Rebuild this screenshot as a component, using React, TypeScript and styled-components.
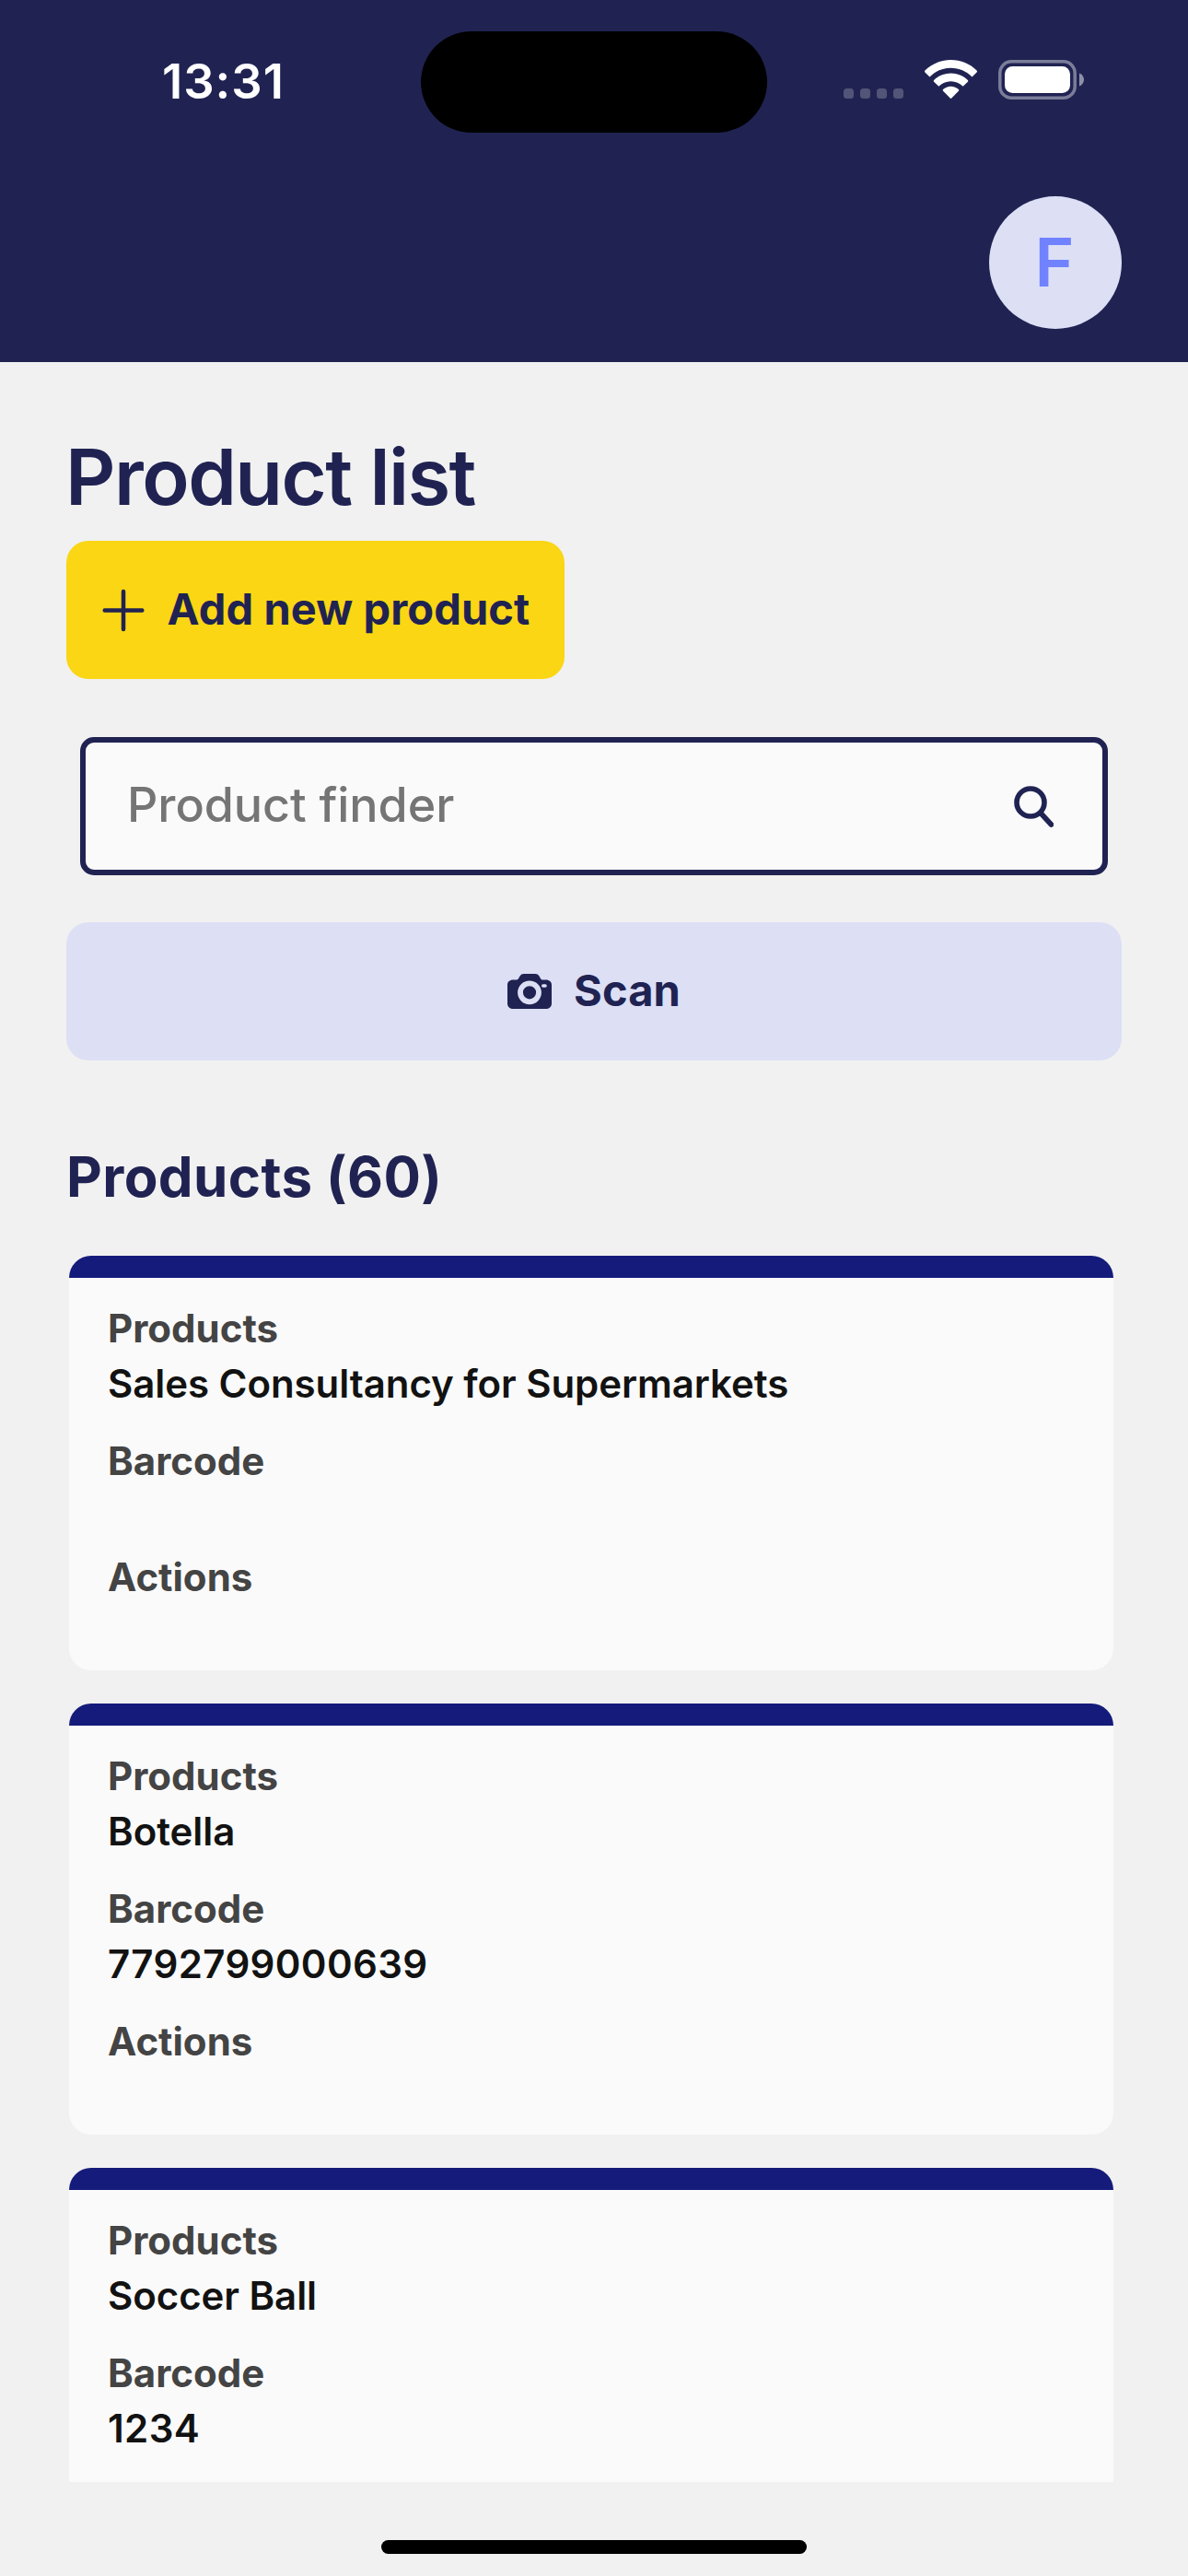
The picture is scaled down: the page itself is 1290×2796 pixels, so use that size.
import React from "react";
import styled, { createGlobalStyle } from "styled-components";

const NAVY = "#202352";
const LAVENDER = "#dddff5";

const GlobalStyle = createGlobalStyle`
  *, *::before, *::after { box-sizing: border-box; }
  html, body { margin: 0; padding: 0; background: #f1f1f1; }
  body { font-family: Inter, "Liberation Sans", sans-serif; }
  h1, h2, p { margin: 0; }
  button { font-family: inherit; border: 0; }
  svg { display: block; flex: none; }
`;

const Screen = styled.div`
  display: flex;
  flex-direction: column;
  width: 1290px;
  height: 2796px;
  overflow: hidden;
  background: #f1f1f1;
`;

const Header = styled.header`
  flex: none;
  height: 393px;
  background: ${NAVY};
`;

const StatusBar = styled.div`
  display: grid;
  grid-template-columns: 457px 376px 457px;
  height: 213px;
  padding-top: 34px;
`;

const Clock = styled.span`
  height: 110px;
  padding-left: 176px;
  line-height: 109px;
  font-size: 52.5px;
  font-weight: 600;
  letter-spacing: 1px;
  color: #fff;
  white-space: nowrap;
`;

const Island = styled.div`
  height: 110px;
  border-radius: 55px;
  background: #000;
`;

const Indicators = styled.div`
  display: flex;
  align-items: flex-end;
  height: 74px;
  padding-left: 83px;
`;

const SignalDots = styled.div`
  display: flex;
  gap: 7px;
  margin: 0 23px 1px 0;
`;

const Dot = styled.i`
  width: 11px;
  height: 11px;
  border-radius: 3.5px;
  background: #525578;
`;

const Wifi = styled.svg`
  margin: 0 23px 1px 0;
`;

const AvatarRow = styled.div`
  display: flex;
  justify-content: flex-end;
  padding-right: 72px;
`;

const Avatar = styled.div`
  display: flex;
  align-items: center;
  justify-content: center;
  width: 144px;
  height: 144px;
  padding-right: 2px;
  border-radius: 50%;
  background: ${LAVENDER};
  color: #7082ff;
  font-size: 73px;
  font-weight: 580;
  line-height: 144px;
`;

const Main = styled.main`
  display: flex;
  flex-direction: column;
  height: 2301px;
  padding: 70px 72px 0;
  overflow: hidden;
`;

const Title = styled.h1`
  margin: 0 0 16px -1px;
  line-height: 108px;
  font-size: 84.5px;
  font-weight: 580;
  letter-spacing: -1.5px;
  color: ${NAVY};
`;

const ActionButton = styled.button<{ $tone: string; $wide?: boolean }>`
  display: flex;
  flex: none;
  align-items: center;
  justify-content: center;
  gap: 24px;
  width: ${(p) => (p.$wide ? "100%" : "541px")};
  height: 150px;
  padding: 0;
  border-radius: 24px;
  background: ${(p) => p.$tone};
  color: ${NAVY};
`;

const ButtonText = styled.span`
  margin-bottom: 3px;
  line-height: 56px;
  font-size: 47px;
  font-weight: 700;
  letter-spacing: 0.1px;
  white-space: nowrap;
`;

const SearchBox = styled.div`
  display: flex;
  flex: none;
  align-items: center;
  justify-content: space-between;
  height: 150px;
  margin: 63px 15px 51px;
  padding: 0 53px 0 45px;
  border: 6px solid ${NAVY};
  border-radius: 15px;
  background: #fafafa;
`;

const Placeholder = styled.span`
  margin-bottom: 2px;
  font-size: 52px;
  font-weight: 450;
  line-height: 60px;
  letter-spacing: -0.05px;
  color: #757575;
`;

const SectionTitle = styled.h2`
  margin: 86px 0 46px;
  line-height: 80px;
  font-size: 60px;
  font-weight: 700;
  letter-spacing: 0.4px;
  color: ${NAVY};
`;

const CardList = styled.div`
  display: flex;
  flex-direction: column;
  gap: 36px;
  padding: 0 9px 0 3px;
`;

const Card = styled.article`
  display: flex;
  flex: none;
  flex-direction: column;
  gap: 24px;
  min-height: 450px;
  padding: 49px 42px 29px;
  border-radius: 24px;
  background: linear-gradient(#151b7a 24px, #fafafa 24px);
`;

const Label = styled.p`
  line-height: 60px;
  font-size: 42px;
  font-weight: 700;
  color: #444;
`;

const Value = styled.p<{ $numeric?: boolean }>`
  min-height: 42px;
  line-height: 60px;
  font-size: 42px;
  font-weight: 600;
  letter-spacing: ${(p) => (p.$numeric ? "0.35px" : "-0.06px")};
  color: #121212;
`;

const HomeArea = styled.footer`
  display: flex;
  justify-content: center;
  padding-top: 63px;
`;

const HomeIndicator = styled.div`
  width: 462px;
  height: 15px;
  border-radius: 8px;
  background: #000;
`;

const WifiIcon = () => (
  <Wifi width="57" height="42" viewBox="0 0 57 42" fill="#fff">
    <path d="M28.5 0C39.4 0 49.300 4.200 56.600 11.500Q57.400 12.500 56.600 13.400L51.500 18.500C45.400 12.300 37.400 8.800 28.500 8.800S11.600 12.300 5.500 18.500L.4 13.400Q-.4 12.500 .4 11.500C7.700 4.200 17.600 0 28.500 0Z" />
    <path d="M28.500 14.500C35.600 14.500 42.100 17.300 46.900 22Q47.600 22.900 46.900 23.700L41.700 28.700C38.200 25.400 33.600 23.300 28.500 23.300S18.800 25.400 15.300 28.700L10.100 23.700Q9.400 22.900 10.100 22C14.900 17.300 21.400 14.500 28.500 14.500Z" />
    <path d="M28.500 28.700C31.800 28.700 34.700 30 36.900 32Q37.600 32.900 36.900 33.700L29.300 41.500Q28.500 42.300 27.700 41.500L20.100 33.700Q19.400 32.900 20.100 32C22.300 30 25.200 28.700 28.500 28.700Z" />
  </Wifi>
);

const BatteryIcon = () => (
  <svg width="93" height="43" viewBox="0 0 93 43">
    <rect x="1.800" y="1.800" width="81.400" height="39.400" rx="12.500" fill="none" stroke="#7b7d99" strokeWidth="3.500" />
    <rect x="7" y="7" width="71" height="29" rx="8.500" fill="#fff" />
    <path d="M88 14.500C91 15.500 93 18.200 93 21.500S91 27.500 88 28.500Z" fill="#8f90a9" />
  </svg>
);

const PlusIcon = () => (
  <svg width="48" height="48" viewBox="0 0 48 48" stroke={NAVY} strokeWidth="4.500" strokeLinecap="round">
    <path d="M24 4V45M3.700 24.500H44.300" />
  </svg>
);

const SearchIcon = () => (
  <svg width="44" height="46" viewBox="0 0 44 46" fill="none" stroke={NAVY} strokeWidth="5.600" strokeLinecap="round">
    <circle cx="19" cy="19" r="15" />
    <path d="M30 30.500L41.500 43" />
  </svg>
);

const CameraIcon = () => (
  <svg width="48" height="38" viewBox="0 0 48 38">
    <path
      fill={NAVY}
      d="M6 6.500H9C10.500 6.500 11.300 6.300 12.200 4.800L13.500 2.600C14.500 .8 16 0 18 0H30C32 0 33.500 .8 34.500 2.600L35.800 4.800C36.500 6.200 37.200 6.500 38.500 6.500H42C45.500 6.500 48 8.800 48 12V32C48 35.500 45.700 38 42 38H6C2.300 38 0 35.500 0 32V12C0 8.800 2.500 6.500 6 6.500Z"
    />
    <circle cx="24" cy="20.300" r="10" fill="none" stroke={LAVENDER} strokeWidth="5.800" />
    <rect x="37" y="11.300" width="5.800" height="3.400" rx="1.700" fill={LAVENDER} />
  </svg>
);

interface Product {
  name: string;
  barcode: string;
  collapsed?: boolean;
}

const products: Product[] = [
  { name: "Sales Consultancy for Supermarkets", barcode: "" },
  { name: "Botella", barcode: "7792799000639" },
  { name: "Soccer Ball", barcode: "1234", collapsed: true },
];

const Field = ({ label, value = "", numeric }: { label: string; value?: string; numeric?: boolean }) => (
  <div>
    <Label>{label}</Label>
    <Value $numeric={numeric}>{value}</Value>
  </div>
);

export default function App() {
  return (
    <>
      <GlobalStyle />
      <Screen>
        <Header>
          <StatusBar>
            <Clock>13:31</Clock>
            <Island />
            <Indicators>
              <SignalDots>
                <Dot />
                <Dot />
                <Dot />
                <Dot />
              </SignalDots>
              <WifiIcon />
              <BatteryIcon />
            </Indicators>
          </StatusBar>
          <AvatarRow>
            <Avatar>F</Avatar>
          </AvatarRow>
        </Header>
        <Main>
          <Title>Product list</Title>
          <ActionButton $tone="#fad614">
            <PlusIcon />
            <ButtonText>Add new product</ButtonText>
          </ActionButton>
          <SearchBox>
            <Placeholder>Product finder</Placeholder>
            <SearchIcon />
          </SearchBox>
          <ActionButton $tone={LAVENDER} $wide>
            <CameraIcon />
            <ButtonText>Scan</ButtonText>
          </ActionButton>
          <SectionTitle>Products (60)</SectionTitle>
          <CardList>
            {products.map((product) => (
              <Card key={product.name}>
                <Field label="Products" value={product.name} />
                <Field label="Barcode" value={product.barcode} numeric />
                {!product.collapsed && <Field label="Actions" />}
              </Card>
            ))}
          </CardList>
        </Main>
        <HomeArea>
          <HomeIndicator />
        </HomeArea>
      </Screen>
    </>
  );
}
